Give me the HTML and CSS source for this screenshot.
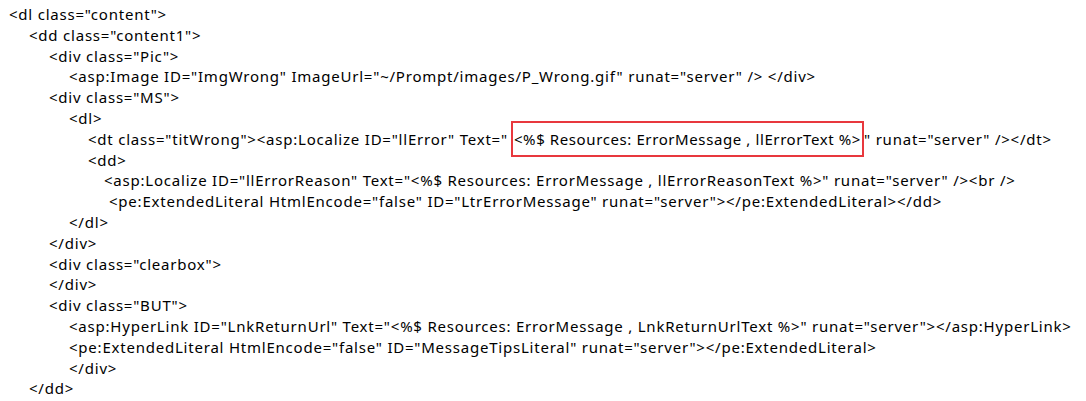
FILE: index.html
```html
<!DOCTYPE html>
<html lang="en">
<head>
    <meta charset="UTF-8">
    <title>ErrorMessage markup</title>
    <link rel="stylesheet" href="styles.css">
</head>
<body>
    <div class="code">
        <div class="line">&lt;dl class="content"&gt;</div>
        <div class="line ind1">&lt;dd class="content1"&gt;</div>
        <div class="line ind2">&lt;div class="Pic"&gt;</div>
        <div class="line ind3">&lt;asp:Image ID="ImgWrong" ImageUrl="~/Prompt/images/P_Wrong.gif" runat="server" /&gt; &lt;/div&gt;</div>
        <div class="line ind2">&lt;div class="MS"&gt;</div>
        <div class="line ind3">&lt;dl&gt;</div>
        <div class="line ind4">&lt;dt class="titWrong"&gt;&lt;asp:Localize ID="llError" Text="<span class="mark">&lt;%$ Resources: ErrorMessage , llErrorText %&gt;</span>" runat="server" /&gt;&lt;/dt&gt;</div>
        <div class="line ind4">&lt;dd&gt;</div>
        <div class="line ind5">&lt;asp:Localize ID="llErrorReason" Text="&lt;%$ Resources: ErrorMessage , llErrorReasonText %&gt;" runat="server" /&gt;&lt;br /&gt;</div>
        <div class="line ind6">&lt;pe:ExtendedLiteral HtmlEncode="false" ID="LtrErrorMessage" runat="server"&gt;&lt;/pe:ExtendedLiteral&gt;&lt;/dd&gt;</div>
        <div class="line ind3">&lt;/dl&gt;</div>
        <div class="line ind2">&lt;/div&gt;</div>
        <div class="line ind2">&lt;div class="clearbox"&gt;</div>
        <div class="line ind2">&lt;/div&gt;</div>
        <div class="line ind2">&lt;div class="BUT"&gt;</div>
        <div class="line ind3">&lt;asp:HyperLink ID="LnkReturnUrl" Text="&lt;%$ Resources: ErrorMessage , LnkReturnUrlText %&gt;" runat="server"&gt;&lt;/asp:HyperLink&gt;</div>
        <div class="line ind3">&lt;pe:ExtendedLiteral HtmlEncode="false" ID="MessageTipsLiteral" runat="server"&gt;&lt;/pe:ExtendedLiteral&gt;</div>
        <div class="line ind3">&lt;/div&gt;</div>
        <div class="line ind1">&lt;/dd&gt;</div>
    </div>
</body>
</html>
```

FILE: styles.css
```css
body {
    margin: 0;
    background: #fff;
    color: #000;
    font-family: "Noto Sans", "Noto Sans CJK SC", sans-serif;
    font-size: 15px;
}
.code {
    padding: 4px 0 0 9px;
}
.line {
    line-height: 20.8px;
    letter-spacing: 0.78px;
    white-space: pre;
}
.ind1 { padding-left: 20px; }
.ind2 { padding-left: 40px; }
.ind3 { padding-left: 60px; }
.ind4 { padding-left: 79px; }
.ind5 { padding-left: 95px; }
.ind6 { padding-left: 100px; }
.mark {
    margin-left: 3px;
    border: 2px solid #e8383d;
    padding: 6px 1px;
    letter-spacing: 0.6px;
}
```
